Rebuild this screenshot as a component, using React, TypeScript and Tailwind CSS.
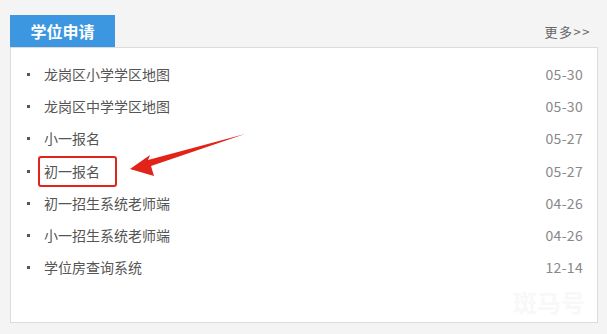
const items = [
  { title: '龙岗区小学学区地图', date: '05-30' },
  { title: '龙岗区中学学区地图', date: '05-30' },
  { title: '小一报名', date: '05-27' },
  { title: '初一报名', date: '05-27', marked: true },
  { title: '初一招生系统老师端', date: '04-26' },
  { title: '小一招生系统老师端', date: '04-26' },
  { title: '学位房查询系统', date: '12-14' },
];

export default function App() {
  return (
    <div
      className="relative w-[607px] h-[334px] bg-[#f4f4f4] pt-[15px] px-[10px] overflow-hidden"
      style={{ fontFamily: '"Microsoft YaHei", "Noto Sans CJK SC", sans-serif' }}
    >
      {/* header */}
      <div className="flex items-end justify-between h-[32px] w-[588px]">
        <div className="w-[105px] h-[32px] bg-[#3d97e0] text-white text-[16px] font-bold flex items-center justify-center">
          学位申请
        </div>
        <a className="text-[13px] text-[#666] mb-[6px] mr-[7px] tracking-[1.5px]">更多&gt;&gt;</a>
      </div>

      {/* panel */}
      <div className="w-[588px] h-[276px] bg-white border border-[#dcdcdc] pt-[10px] pl-[15px] pr-[14px]">
        <ul>
          {items.map((it) => (
            <li key={it.title} className="flex items-center h-[32.3px] text-[14px]">
              <span className="w-[3px] h-[3px] bg-[#555] mr-[14px] ml-[1px]" />
              <span
                className={
                  it.marked
                    ? 'text-[#555] border-2 border-[#e2231a] rounded-[3px] h-[31px] w-[79px] -ml-[6px] pl-[4px] flex items-center'
                    : 'text-[#555]'
                }
              >
                {it.title}
              </span>
              <span className="ml-auto text-[#888] text-[14px] tracking-[0.3px]">{it.date}</span>
            </li>
          ))}
        </ul>
      </div>

      {/* red arrow annotation */}
      <svg className="absolute left-0 top-0" width="607" height="334">
        <path d="M245 134 L148 160 L150 155 L130 169 L154 176 L151 166 Z" fill="#e2231a" />
      </svg>

      {/* watermark */}
      <div className="absolute right-[22px] bottom-[14px] text-[24px] font-bold text-[#f8f8f8]">斑马号</div>
    </div>
  );
}
